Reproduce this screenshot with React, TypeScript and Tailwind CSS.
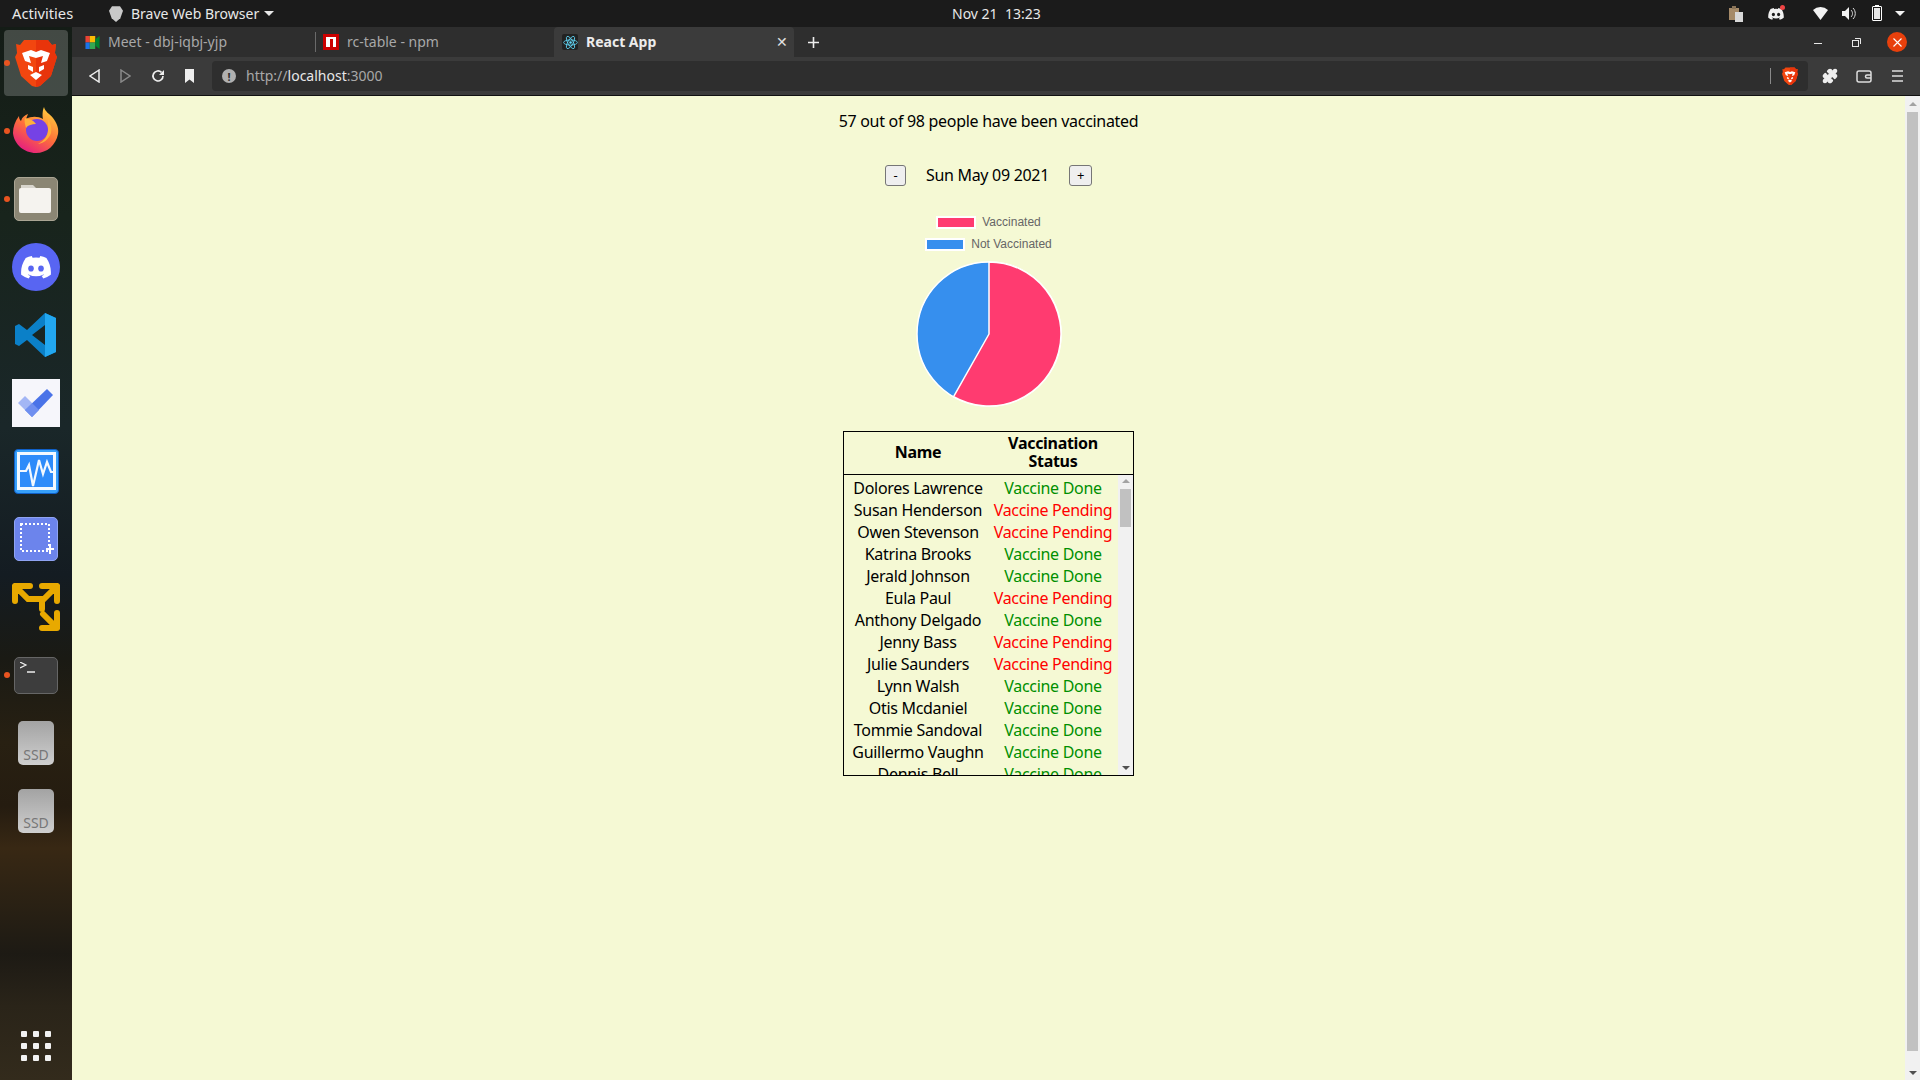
import { Fragment } from "react";
import type { ReactNode } from "react";
import { Puzzle } from "lucide-react";

const people = [
  ["Dolores Lawrence", true],
  ["Susan Henderson", false],
  ["Owen Stevenson", false],
  ["Katrina Brooks", true],
  ["Jerald Johnson", true],
  ["Eula Paul", false],
  ["Anthony Delgado", true],
  ["Jenny Bass", false],
  ["Julie Saunders", false],
  ["Lynn Walsh", true],
  ["Otis Mcdaniel", true],
  ["Tommie Sandoval", true],
  ["Guillermo Vaughn", true],
  ["Dennis Bell", true],
] as const;

const Lion = ({ size = 42 }: { size?: number }) => (
  <svg width={size} height={size * 1.14} viewBox="0 0 42 48">
    <path d="M9 1h24l4 5 4-1-1 9 2 4-6 19-11 10-4 1-4-1-11-10L0 18l2-4-1-9 4 1z" fill="#f2460f" />
    <path d="M21 48l4-1 11-10 6-19-2-4 1-9-4 1-4-5H21z" fill="#e8340b" />
    <path d="M7 14l9-3 5 2 5-2 9 3-3 8-6 2 2-7-7 2-7-2 2 7-6-2zM13 26l5 2v5l-5-3zM29 26l-5 2v5l5-3zM15 36l6-3 6 3-6 5z" fill="#fff" />
  </svg>
);

const DockDot = () => <span className="absolute left-[4px] top-1/2 h-[6px] w-[6px] -translate-y-1/2 rounded-full bg-[#e95420]" />;

function Ssd() {
  return (
    <div className="flex h-[44px] w-[36px] items-end justify-center rounded-[5px] bg-gradient-to-b from-[#a3a3a3] to-[#cfcfcf] pb-[1px]">
      <span className="text-[14px] leading-[18px] text-[#777]">SSD</span>
    </div>
  );
}

const dockIcons = [
  { key: "brave", dot: true, active: true, icon: <Lion size={42} /> },
  {
    key: "firefox",
    dot: true,
    icon: (
      <svg className="-mt-[2px]" width="46" height="46" viewBox="0 0 46 46">
        <defs>
          <linearGradient id="ff" x1="0.8" y1="0" x2="0.2" y2="1">
            <stop offset="0" stopColor="#ffd23d" />
            <stop offset="0.5" stopColor="#ff7139" />
            <stop offset="1" stopColor="#e31587" />
          </linearGradient>
        </defs>
        <path d="M31 0c1 5 6 7 9 11 4 5 6 11 5 16-2 11-11 19-22 19C11 46 1 37 0 26c0-6 2-12 6-17 0 3 1 4 2 5 1-4 4-6 7-7l-2 5c5-3 12-3 17 0-1-5 0-10 1-12z" fill="url(#ff)" />
        <circle cx="24" cy="23" r="11" fill="#7542e5" />
        <path d="M12 11c6 1 9 3 11 6-4 0-8 1-10 4-1-4-2-7-1-10zM35 12c3 4 4 9 3 14-2 6-7 10-13 11 6-3 10-8 10-14 0-4 0-7 0-11z" fill="#ffb03a" />
      </svg>
    ),
  },
  {
    key: "files",
    dot: true,
    icon: (
      <div className="flex h-[44px] w-[44px] items-center justify-center rounded-[5px] border border-[#aaa594] bg-[#8b8674]">
        <svg width="34" height="28" viewBox="0 0 34 28">
          <path d="M2 0h12l4 4H2z" fill="#d8d5cd" />
          <rect y="3" width="32" height="25" rx="2" fill="#f5f3ef" />
        </svg>
      </div>
    ),
  },
  {
    key: "discord",
    icon: (
      <div className="flex h-[48px] w-[48px] items-center justify-center rounded-full bg-[#5865f2]">
        <svg width="30" height="23" viewBox="0 0 30 23">
          <path d="M25.400 2A24 24 0 0 0 19.300.1l-.8 1.600a22 22 0 0 0-6.900 0L10.800.1A24 24 0 0 0 4.700 2C.8 7.700-.3 13.300.2 18.800a25 25 0 0 0 7.500 3.800l1.600-2.600-2.400-1.200.6-.4a17 17 0 0 0 15 0l.6.4-2.400 1.200 1.600 2.600a25 25 0 0 0 7.500-3.800c.6-6.400-1.100-12-4.400-16.800z" fill="#fff" />
          <ellipse cx="10" cy="12.500" rx="2.800" ry="3.100" fill="#5865f2" />
          <ellipse cx="20" cy="12.500" rx="2.800" ry="3.100" fill="#5865f2" />
        </svg>
      </div>
    ),
  },
  {
    key: "vscode",
    icon: (
      <svg width="44" height="44" viewBox="0 0 44 44">
        <path d="M31 0l11 5v34l-11 5-18-17-8 6-4-2V13l4-2 8 6zM31 12L18 22l13 10z" fill="#0b80c8" />
        <path d="M31 0l11 5v34l-11 5z" fill="#22a7f0" />
      </svg>
    ),
  },
  {
    key: "todo",
    icon: (
      <div className="flex h-[48px] w-[48px] items-center justify-center bg-[#f6f6fb]">
        <svg width="36" height="28" viewBox="0 0 36 28">
          <path d="M0 14l7-7 7 7-7 7z" fill="#a3b6f5" />
          <path d="M7 21l22-21 6 6-21 22z" fill="#4a73e8" />
          <path d="M7 21l7-7 7 7-7 7z" fill="#6f8ff0" />
        </svg>
      </div>
    ),
  },
  {
    key: "monitor",
    icon: (
      <div className="flex h-[45px] w-[45px] items-center justify-center rounded-[4px] border border-[#0f5fc8] bg-[#37a0fa]">
        <svg width="39" height="38" viewBox="0 0 39 38">
          <rect x="1.500" y="1.500" width="36" height="35" fill="#2d8bfa" stroke="#f2f8ff" strokeWidth="3" />
          <path d="M3 19h6l3-6 4 21 6-26 4 14 4-12 4 10h4" fill="none" stroke="#f2f8ff" strokeWidth="2.200" />
        </svg>
      </div>
    ),
  },
  {
    key: "screenshot",
    icon: (
      <div className="flex h-[44px] w-[44px] items-center justify-center rounded-[5px] border border-[#8fa3f2] bg-[#6c84ec]">
        <svg width="36" height="36" viewBox="0 0 36 36">
          <rect x="3" y="3" width="28" height="27" fill="none" stroke="#fff" strokeWidth="2" strokeDasharray="2 2" />
          <path d="M28 27h8v2h-8zM31 23h2v10h-2z" fill="#fff" />
        </svg>
      </div>
    ),
  },
  {
    key: "vm",
    icon: (
      <svg width="48" height="48" viewBox="0 0 48 48" fill="none" stroke="#e8a900" strokeWidth="6" strokeLinecap="round">
        <path d="M3 3H18M3 3V18M3 3L16 16H30M45 3H30M45 3V18M45 3L30 18V26M45 45H30M45 45V30M45 45L31 31" />
      </svg>
    ),
  },
  {
    key: "terminal",
    dot: true,
    icon: (
      <div className="relative h-[37px] w-[44px] rounded-[5px] border border-[#666] bg-[#3d3d3d]">
        <svg className="absolute left-[5px] top-[4px]" width="16" height="12" viewBox="0 0 16 12">
          <path d="M0 0l6 3-6 3" fill="none" stroke="#eee" strokeWidth="1.200" />
          <path d="M7 10h8" stroke="#eee" strokeWidth="1.500" />
        </svg>
      </div>
    ),
  },
  { key: "ssd1", icon: <Ssd /> },
  { key: "ssd2", icon: <Ssd /> },
];

const Dock = () => (
  <aside className="flex w-[72px] flex-none flex-col items-center bg-[linear-gradient(180deg,#141c16_0%,#18241c_18%,#1a2729_38%,#141c22_52%,#1a1a14_60%,#282012_68%,#251c10_74%,#382814_78%,#282014_84%,#1d1a14_88%,#2a2419_93%,#332b1c_100%)] pb-[19px] pt-[2px]">
    <div className="flex w-full flex-col">
      {dockIcons.map((d) => (
        <div key={d.key} className="relative flex h-[68px] items-center justify-center">
          {d.active && <div className="absolute inset-x-[4px] inset-y-[1px] rounded-[4px] bg-white/20" />}
          {d.dot && <DockDot />}
          <div className="relative">{d.icon}</div>
        </div>
      ))}
    </div>
    <div className="mt-auto grid grid-cols-3 gap-[6px]">
      {Array.from({ length: 9 }).map((_, i) => (
        <span key={i} className="h-[6px] w-[6px] rounded-[1px] bg-[#f2f2f2]" />
      ))}
    </div>
  </aside>
);

const TopBar = () => (
  <header className="relative flex h-[27px] flex-none items-center bg-[#1b1b1b] text-[14px] text-[#e8e8e8]">
    <span className="ml-[12px] w-[97px] text-[14.700px]">Activities</span>
    <svg width="14" height="16" viewBox="0 0 42 48">
      <path d="M9 1h24l9 13-8 23-13 11L8 37 0 14z" fill="#c9c9c9" />
    </svg>
    <span className="ml-[8px]">Brave Web Browser</span>
    <span className="ml-[5px] h-0 w-0 border-x-[5px] border-t-[5px] border-x-transparent border-t-[#e8e8e8]" />
    <span className="absolute left-[952px]">Nov 21&nbsp; 13:23</span>
    <div className="ml-auto flex items-center">
      <svg width="14" height="16" viewBox="0 0 14 16">
        <rect y="2" width="10" height="12" fill="#a58a68" />
        <rect x="3" width="4" height="3" fill="#8a7458" />
        <rect x="6" y="6" width="8" height="10" fill="#d8d8d8" />
      </svg>
      <span className="relative ml-[25px] flex">
        <svg width="16" height="12" viewBox="0 0 30 23">
          <path d="M25.400 2a24 24 0 0 0-6-2l-.9 1.700a22 22 0 0 0-7 0L10.600 0a24 24 0 0 0-6 2C.8 7.700-.3 13.300.2 18.800a25 25 0 0 0 7.500 3.800L9.300 20l-2.400-1.200.6-.4a17 17 0 0 0 15 0l.6.4-2.400 1.200 1.600 2.600a25 25 0 0 0 7.500-3.800c.6-6.400-1.100-12-4.400-16.800z" fill="#f0f0f0" />
          <ellipse cx="10" cy="12.500" rx="3" ry="3.300" fill="#1b1b1b" />
          <ellipse cx="20" cy="12.500" rx="3" ry="3.300" fill="#1b1b1b" />
        </svg>
        <span className="absolute -right-[1px] -top-[3px] h-[5px] w-[5px] rounded-full bg-[#ef4444]" />
      </span>
      <svg className="ml-[29px]" width="15" height="13" viewBox="0 0 15 13">
        <path d="M0 3a11 11 0 0 1 15 0L7.500 13z" fill="#f2f2f2" />
      </svg>
      <svg className="ml-[14px]" width="15" height="13" viewBox="0 0 15 13">
        <path d="M0 4h3l4-4v13L3 9H0z" fill="#f2f2f2" />
        <path d="M9 3c2 2 2 5 0 7M11 1c3 3 3 8 0 11" fill="none" stroke="#ddd" />
      </svg>
      <span className="relative ml-[15px] flex h-[15px] w-[10px] items-center justify-center rounded-[1px] border border-white">
        <span className="h-[11px] w-[6px] bg-[#e8e8e8]" />
        <span className="absolute -top-[2px] h-[1px] w-[4px] bg-white" />
      </span>
      <span className="ml-[13px] mr-[15px] h-0 w-0 border-x-[5px] border-t-[5px] border-x-transparent border-t-[#f2f2f2]" />
    </div>
  </header>
);

const Tab = ({ title, icon, active, className }: { title: string; icon: ReactNode; active?: boolean; className: string }) => (
  <div className={`flex h-[30px] flex-none items-center text-[14px] ${className} ${active ? "rounded-t-[4px] bg-[#3b3b3b] font-bold text-[#ececec]" : "text-[#a8a8a8]"}`}>
    {icon}
    <span className="mb-[2px] ml-[8px]">{title}</span>
    {active && <span className="ml-auto mr-[6px] text-[14px] font-normal leading-none text-[#e0e0e0]">✕</span>}
  </div>
);

const BrowserChrome = () => (
  <>
    <div className="flex h-[30px] flex-none items-center bg-[#2e2e2e]">
      <Tab
        className="w-[243px] pl-[13px]"
        title="Meet - dbj-iqbj-yjp"
        icon={
          <svg width="15" height="13" viewBox="0 0 13 12">
            <rect width="4" height="6" fill="#ea4335" />
            <rect x="4" width="5" height="6" fill="#fbbc04" />
            <rect y="6" width="4" height="6" fill="#1a73e8" />
            <rect x="4" y="6" width="5" height="6" fill="#34a853" />
            <path d="M9 3l4-3v12L9 9z" fill="#00832d" />
          </svg>
        }
      />
      <span className="h-[20px] w-px flex-none bg-[#6a6a6a]" />
      <Tab
        className="w-[238px] pl-[7px]"
        title="rc-table - npm"
        icon={
          <span className="flex h-[16px] w-[16px] items-end justify-center bg-[#cb0000] pb-[3px]">
            <span className="h-[10px] w-[10px] border-l-[4px] border-r-[3px] border-t-[2px] border-white" />
          </span>
        }
      />
      <Tab
        active
        className="w-[240px] pl-[8px]"
        title="React App"
        icon={
          <span className="flex h-[16px] w-[16px] items-center justify-center rounded-[2px] bg-[#222]">
            <svg width="15" height="15" viewBox="-12 -12 24 24" fill="none" stroke="#61dafb" strokeWidth="1.300">
              <ellipse rx="11" ry="4.200" />
              <ellipse rx="11" ry="4.200" transform="rotate(60)" />
              <ellipse rx="11" ry="4.200" transform="rotate(120)" />
              <circle r="2" fill="#61dafb" stroke="none" />
            </svg>
          </span>
        }
      />
      <svg className="ml-[13px] flex-none" width="13" height="13" viewBox="0 0 13 13">
        <path d="M6.500 1v11M1 6.500h11" stroke="#eee" strokeWidth="1.600" />
      </svg>
      <div className="ml-auto flex items-center">
        <span className="mr-[30px] mt-[2px] h-px w-[8px] bg-[#e8e8e8]" />
        <svg className="mr-[26px]" width="9" height="9" viewBox="0 0 9 9" fill="none" stroke="#e8e8e8">
          <rect x="0.500" y="2.500" width="6" height="6" />
          <path d="M3 .5h5.500V6" />
        </svg>
        <span className="mr-[13px] flex h-[20px] w-[20px] items-center justify-center rounded-full bg-[#e8400c]">
          <svg width="9" height="9" viewBox="0 0 9 9">
            <path d="M.5.5l8 8M8.500.5l-8 8" stroke="#fff" strokeWidth="1.100" />
          </svg>
        </span>
      </div>
    </div>
    <div className="flex h-[39px] flex-none items-center border-b border-[#111] bg-[#3b3b3b]">
      <svg className="ml-[17px] flex-none" width="11" height="14" viewBox="0 0 11 14">
        <path d="M10 1L1 7l9 6z" fill="none" stroke="#eee" strokeWidth="1.500" />
      </svg>
      <svg className="ml-[20px] flex-none" width="11" height="14" viewBox="0 0 11 14">
        <path d="M1 1l9 6-9 6z" fill="none" stroke="#8a8a8a" strokeWidth="1.500" />
      </svg>
      <svg className="ml-[20px] flex-none" width="14" height="14" viewBox="0 0 14 14" fill="none">
        <path d="M12 7a5 5 0 1 1-1.500-3.600" stroke="#eee" strokeWidth="1.700" />
        <path d="M13 1v5H8z" fill="#eee" />
      </svg>
      <svg className="ml-[20px] flex-none" width="9" height="14" viewBox="0 0 9 14">
        <path d="M0 0h9v14L4.500 10.500 0 14z" fill="#eee" />
      </svg>
      <div className="ml-[18px] flex h-[30px] w-[1596px] flex-none items-center rounded-[4px] bg-[#2e2e2e] pl-[10px] text-[14px] text-[#a8a8a8]">
        <span className="flex h-[14px] w-[14px] flex-none items-center justify-center rounded-full bg-[#b0b0b0] text-[11px] font-bold leading-none text-[#2e2e2e]">!</span>
        <span className="mb-[2px] ml-[10px]">
          http://<span className="text-[#e8e8e8]">localhost</span>:3000
        </span>
        <span className="ml-auto mr-[11px] h-[16px] w-px bg-[#8a8a8a]" />
        <span className="mr-[10px] flex">
          <Lion size={16} />
        </span>
      </div>
      <Puzzle className="ml-[14px] h-[16px] w-[16px] flex-none" fill="#eee" stroke="#eee" />
      <svg className="ml-[18px] flex-none" width="16" height="13" viewBox="0 0 16 13" fill="none" stroke="#ddd" strokeWidth="1.500">
        <rect x="1" y="1" width="14" height="11" rx="2" />
        <path d="M15 5h-4a1.500 1.500 0 0 0 0 3h4" />
      </svg>
      <svg className="ml-[20px] flex-none" width="11" height="12" viewBox="0 0 11 12">
        <path d="M0 1h11M0 6h11M0 11h11" stroke="#ddd" strokeWidth="1.500" />
      </svg>
    </div>
  </>
);

const Pie = () => (
  <svg className="mt-[9px]" width="148" height="148" viewBox="-74 -74 148 148">
    <circle r="72" fill="#368fee" stroke="#fff" strokeWidth="1.500" />
    <path d="M0 0V-72A72 72 0 1 1 -35.400 62.700Z" fill="#ff3b70" stroke="#fff" strokeWidth="1.500" strokeLinejoin="round" />
  </svg>
);

const LegendRow = ({ color, label, mt }: { color: string; label: string; mt: string }) => (
  <div className={`flex h-[14px] items-center ${mt}`}>
    <span className={`h-[13px] w-[40px] border-2 border-white ${color}`} />
    <span className="ml-[6px] font-['Liberation_Sans',sans-serif] text-[12px] tracking-normal text-[#666]">{label}</span>
  </div>
);

const VaccineTable = () => (
  <div className="mt-[23px] w-[291px] border-[1.5px] border-black">
    <div className="grid h-[43px] grid-cols-[148px_122px] items-center border-b-[1.5px] border-black pb-[2px] text-center font-bold leading-[18px] text-black">
      <span>Name</span>
      <span>
        Vaccination
        <br />
        Status
      </span>
    </div>
    <div className="flex h-[300px]">
      <div className="flex-1 overflow-hidden pt-[2px]">
        <div className="grid grid-cols-[148px_122px] whitespace-nowrap text-center leading-[22px]">
          {people.map(([name, done]) => (
            <Fragment key={name}>
              <span className="text-black">{name}</span>
              <span className={done ? "text-[#008f00]" : "text-[#ff0000]"}>{done ? "Vaccine Done" : "Vaccine Pending"}</span>
            </Fragment>
          ))}
        </div>
      </div>
      <div className="flex w-[15px] flex-none flex-col items-center bg-[#f1f1f1] pt-[4px]">
        <span className="h-0 w-0 border-x-[4px] border-b-[4px] border-x-transparent border-b-[#a3a3a3]" />
        <span className="mt-[6px] h-[38px] w-[11px] bg-[#c1c1c1]" />
        <span className="mb-[5px] mt-auto h-0 w-0 border-x-[4px] border-t-[4px] border-x-transparent border-t-[#505050]" />
      </div>
    </div>
  </div>
);

const Scrollbar = () => (
  <div className="flex w-[15px] flex-none flex-col items-center bg-[#f1f1f1] pt-[6px]">
    <span className="h-0 w-0 border-x-[4px] border-b-[4px] border-x-transparent border-b-[#a3a3a3]" />
    <span className="mt-[6px] w-[11px] flex-1 bg-[#c1c1c1]" />
    <span className="mb-[5px] mt-[20px] h-0 w-0 border-x-[4px] border-t-[4px] border-x-transparent border-t-[#505050]" />
  </div>
);

export default function App() {
  return (
    <div className="relative flex h-[1080px] w-[1920px] flex-col overflow-hidden bg-[#1b1b1b] font-['Noto_Sans',sans-serif]">
      <TopBar />
      <div className="flex min-h-0 flex-1">
        <Dock />
        <div className="flex min-w-0 flex-1 flex-col">
          <BrowserChrome />
          <div className="flex min-h-0 flex-1">
            <main className="flex flex-1 flex-col items-center bg-[#f5f9d4] pt-[14px] text-[16px] tracking-[-0.3px] text-black">
              <p className="leading-[22px]">57 out of 98 people have been vaccinated</p>
              <div className="mt-[32px] flex h-[22px] items-center">
                <button className="h-[21px] w-[21px] rounded-[3px] border border-[#767676] bg-[#efefef] text-[13px] leading-none">-</button>
                <span className="mx-[20px] leading-[22px]">Sun May 09 2021</span>
                <button className="h-[21px] w-[23px] rounded-[3px] border border-[#767676] bg-[#efefef] text-[13px] leading-none">+</button>
              </div>
              <div className="mt-[29px] flex flex-col items-center">
                <LegendRow color="bg-[#ff3b70]" label="Vaccinated" mt="" />
                <LegendRow color="bg-[#368fee]" label="Not Vaccinated" mt="mt-[8px]" />
                <Pie />
              </div>
              <VaccineTable />
            </main>
            <Scrollbar />
          </div>
        </div>
      </div>
    </div>
  );
}
